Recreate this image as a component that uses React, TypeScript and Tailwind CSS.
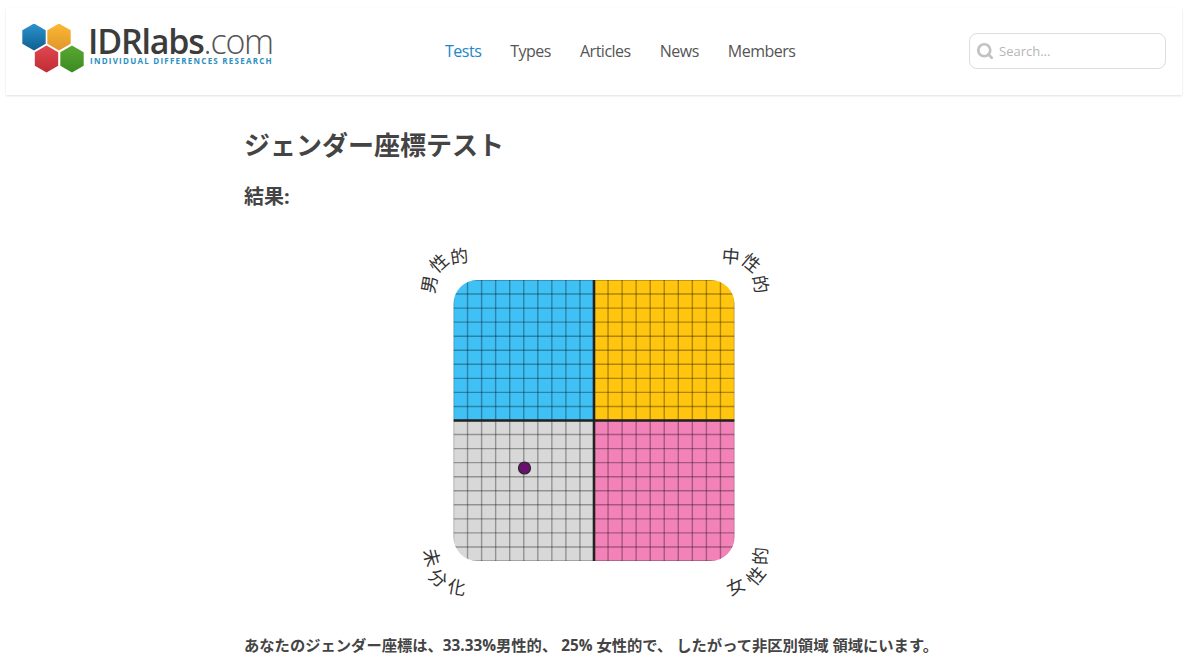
import React from 'react';
import { Search } from 'lucide-react';

const FONT = "font-['Open_Sans','Noto_Sans_CJK_JP',sans-serif]";

const navItems = ['Tests', 'Types', 'Articles', 'News', 'Members'];

/* pointy-top hexagon centred on cx, cy */
const hexPoints = (cx: number, cy: number, r: number) =>
  [0, 60, 120, 180, 240, 300]
    .map((a) => {
      const t = (a * Math.PI) / 180;
      return `${cx + r * Math.sin(t)},${cy - r * Math.cos(t)}`;
    })
    .join(' ');

const LogoMark = () => (
  <svg viewBox="0 0 66 50" className="w-[66px] h-[50px] shrink-0">
    <defs>
      <linearGradient id="hexBlue" x1="0" y1="0" x2="0" y2="1">
        <stop offset="0%" stopColor="#2b93cf" />
        <stop offset="100%" stopColor="#0f5f8f" />
      </linearGradient>
      <linearGradient id="hexOrange" x1="0" y1="0" x2="0" y2="1">
        <stop offset="0%" stopColor="#fbb934" />
        <stop offset="100%" stopColor="#e0952a" />
      </linearGradient>
      <linearGradient id="hexRed" x1="0" y1="0" x2="0" y2="1">
        <stop offset="0%" stopColor="#e2474f" />
        <stop offset="100%" stopColor="#bf2c36" />
      </linearGradient>
      <linearGradient id="hexGreen" x1="0" y1="0" x2="0" y2="1">
        <stop offset="0%" stopColor="#5aa832" />
        <stop offset="100%" stopColor="#3b8a22" />
      </linearGradient>
    </defs>
    <polygon points={hexPoints(13, 13, 13.5)} fill="url(#hexBlue)" />
    <polygon points={hexPoints(38, 13, 13.5)} fill="url(#hexOrange)" />
    <polygon points={hexPoints(25.5, 35, 13.5)} fill="url(#hexRed)" />
    <polygon points={hexPoints(51, 35, 13.5)} fill="url(#hexGreen)" />
  </svg>
);

const Logo = () => (
  <div className="flex items-start gap-px mb-[5px]">
    <LogoMark />
    <div className="flex flex-col mt-[2px]">
      <p className="text-[34px] leading-[30px] tracking-[-1.2px] text-[#3c3c3c] font-['Open_Sans',sans-serif] font-semibold">
        IDRlabs<span className="font-light text-[#555]">.com</span>
      </p>
      <p className="ml-[2px] text-[8px] leading-[9px] tracking-[1.24px] font-bold text-[#2b8fc2] font-['Open_Sans',sans-serif] whitespace-nowrap">
        INDIVIDUAL DIFFERENCES RESEARCH
      </p>
    </div>
  </div>
);

const Header = () => (
  <header className="mx-[6px] mt-2 h-[87px] bg-white shadow-[0_1px_2px_rgba(0,0,0,0.12)] flex items-center pl-[15px] pr-4">
    <div className="w-[424px]">
      <Logo />
    </div>
    <nav className="flex items-center gap-[29px] mb-[1px] text-base tracking-[-0.5px]">
      {navItems.map((item, i) => (
        <a key={item} className={i === 0 ? 'text-[#2286c9]' : 'text-[#555]'}>
          {item}
        </a>
      ))}
    </nav>
    <div className="ml-auto mb-[1px] w-[197px] h-9 rounded-lg border border-[#dddddd] flex items-center gap-[5px] pl-[6px]">
      <Search size={18} strokeWidth={3.6} className="text-[#c2c2c2]" />
      <span className="mt-px text-[13px] text-[#b5b5b5]">Search...</span>
    </div>
  </header>
);

const gridSteps = Array.from({ length: 21 }, (_, i) => i);

const labels = [
  { ch: '男', x: 34, y: 49, r: -80 },
  { ch: '性', x: 44, y: 27, r: -42 },
  { ch: '的', x: 65, y: 20, r: -8 },
  { ch: '中', x: 337, y: 20, r: 5 },
  { ch: '性', x: 358, y: 27, r: 40 },
  { ch: '的', x: 368, y: 49, r: 80 },
  { ch: '未', x: 39, y: 322, r: 75 },
  { ch: '分', x: 45, y: 342, r: 40 },
  { ch: '化', x: 63, y: 351, r: 10 },
  { ch: '女', x: 341, y: 350, r: -25 },
  { ch: '性', x: 361, y: 340, r: -50 },
  { ch: '的', x: 365, y: 321, r: -88 },
];

/* 20x20 grid with four quadrants and curved corner labels */
const CoordinateChart = () => {
  const x0 = 59.5;
  const y0 = 45;
  const size = 281;
  const half = size / 2;
  const cell = size / 20;
  return (
    <svg viewBox="0 0 400 370" className="w-[400px] h-[370px] block mx-auto">
      <defs>
        <clipPath id="chartClip">
          <rect x={x0} y={y0} width={size} height={size} rx="24" />
        </clipPath>
      </defs>
      <g clipPath="url(#chartClip)">
        <rect x={x0} y={y0} width={half} height={half} fill="#3fc1f5" />
        <rect x={x0 + half} y={y0} width={half} height={half} fill="#ffc50f" />
        <rect x={x0} y={y0 + half} width={half} height={half} fill="#d8d8d8" />
        <rect x={x0 + half} y={y0 + half} width={half} height={half} fill="#f382b9" />
        {gridSteps.map((i) => (
          <g key={i} stroke="#000" strokeOpacity="0.32" strokeWidth="1.4">
            <line x1={x0 + i * cell} y1={y0} x2={x0 + i * cell} y2={y0 + size} />
            <line x1={x0} y1={y0 + i * cell} x2={x0 + size} y2={y0 + i * cell} />
          </g>
        ))}
        <line x1={x0 + half} y1={y0} x2={x0 + half} y2={y0 + size} stroke="#222" strokeWidth="2.6" />
        <line x1={x0} y1={y0 + half} x2={x0 + size} y2={y0 + half} stroke="#222" strokeWidth="2.6" />
      </g>
      <circle cx="130.5" cy="233" r="6" fill="#6a1070" stroke="#2a2a2a" strokeWidth="1.2" />
      {labels.map((l, i) => (
        <text
          key={i}
          x={l.x}
          y={l.y}
          textAnchor="middle"
          dominantBaseline="central"
          transform={`rotate(${l.r} ${l.x} ${l.y})`}
          fill="#333"
          className="text-[18px] font-['Noto_Sans_CJK_JP',sans-serif]"
        >
          {l.ch}
        </text>
      ))}
    </svg>
  );
};

export default function App() {
  return (
    <div className={`${FONT} h-[668px] overflow-hidden bg-white text-[#444]`}>
      <Header />
      <main className="w-[700px] ml-[244px] pt-[32px]">
        <h1 className="text-[26px] leading-9 font-bold">ジェンダー座標テスト</h1>
        <h2 className="mt-[21px] text-[20px] leading-[26px] font-bold">結果:</h2>
        <div className="mt-[25px]">
          <CoordinateChart />
        </div>
        <p className="mt-[30px] text-[15.3px] leading-5 font-bold whitespace-nowrap">
          あなたのジェンダー座標は、33.33%男性的、 25% 女性的で、 したがって非区別領域 領域にいます。
        </p>
      </main>
    </div>
  );
}
